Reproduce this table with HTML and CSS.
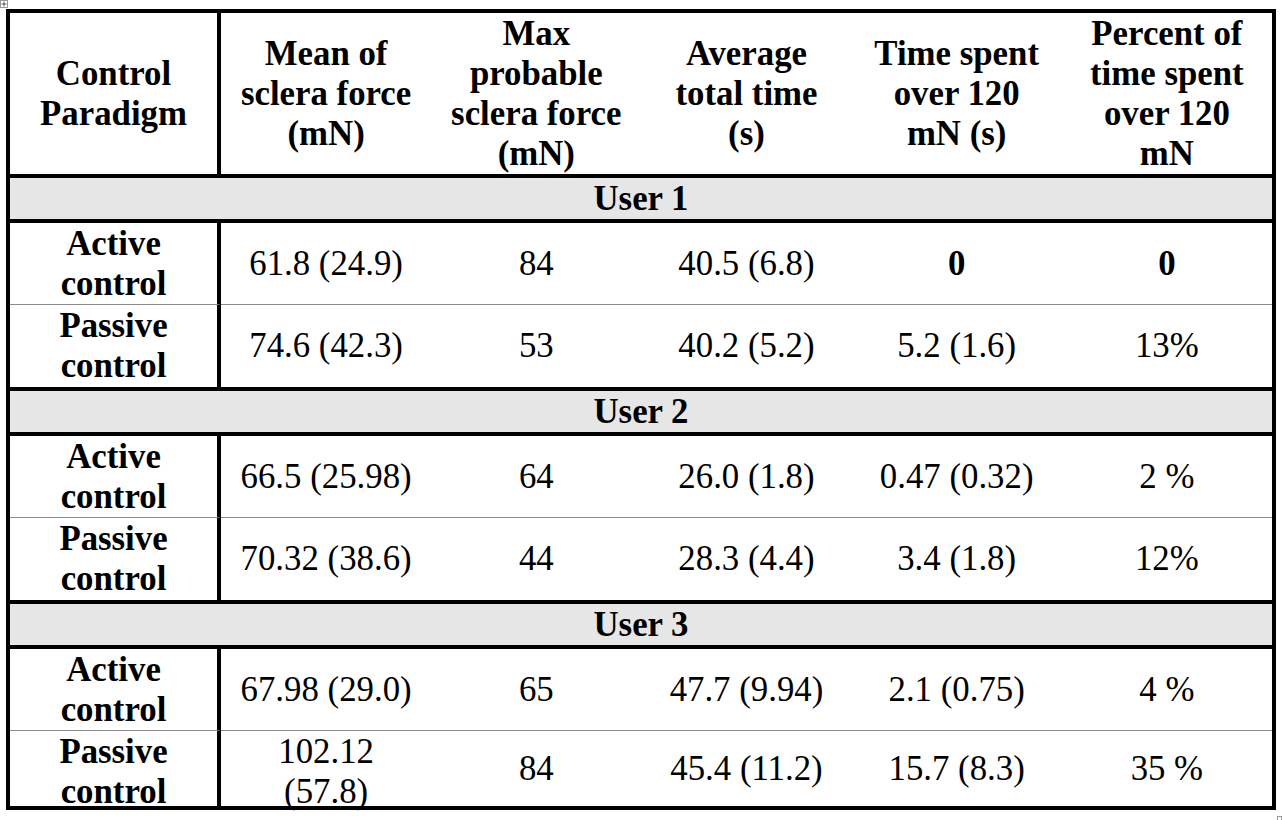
FILE: index.html
```html
<!DOCTYPE html>
<html>
<head>
<meta charset="utf-8">
<link rel="stylesheet" href="styles.css">
</head>
<body>
<div class="move-handle">
  <svg width="8" height="8" viewBox="0 0 8 8"><rect x="0.5" y="0.5" width="7" height="7" fill="#fff" stroke="#9a9a9a"/><path d="M4 1.5V6.5M1.5 4H6.5" stroke="#555" stroke-width="1"/></svg>
</div>
<table class="results">
  <colgroup>
    <col class="c-first">
    <col><col><col><col><col>
  </colgroup>
  <tr class="head">
    <td class="label">Control Paradigm</td>
    <td>Mean of sclera force (mN)</td>
    <td>Max probable sclera force (mN)</td>
    <td>Average total time (s)</td>
    <td>Time spent over 120 mN (s)</td>
    <td>Percent of time spent over 120 mN</td>
  </tr>
  <tr class="user"><td colspan="6">User 1</td></tr>
  <tr class="active">
    <td class="label">Active control</td>
    <td>61.8 (24.9)</td><td>84</td><td>40.5 (6.8)</td><td class="strong">0</td><td class="strong">0</td>
  </tr>
  <tr class="passive">
    <td class="label">Passive control</td>
    <td>74.6 (42.3)</td><td>53</td><td>40.2 (5.2)</td><td>5.2 (1.6)</td><td>13%</td>
  </tr>
  <tr class="user"><td colspan="6">User 2</td></tr>
  <tr class="active">
    <td class="label">Active control</td>
    <td>66.5 (25.98)</td><td>64</td><td>26.0 (1.8)</td><td>0.47 (0.32)</td><td>2 %</td>
  </tr>
  <tr class="passive">
    <td class="label">Passive control</td>
    <td>70.32 (38.6)</td><td>44</td><td>28.3 (4.4)</td><td>3.4 (1.8)</td><td>12%</td>
  </tr>
  <tr class="user"><td colspan="6">User 3</td></tr>
  <tr class="active">
    <td class="label">Active control</td>
    <td>67.98 (29.0)</td><td>65</td><td>47.7 (9.94)</td><td>2.1 (0.75)</td><td>4 %</td>
  </tr>
  <tr class="passive last">
    <td class="label"><div class="clip">Passive control</div></td>
    <td><div class="clip">102.12 (57.8)</div></td>
    <td><div class="clip mid">84</div></td>
    <td><div class="clip mid">45.4 (11.2)</div></td>
    <td><div class="clip mid">15.7 (8.3)</div></td>
    <td><div class="clip mid">35 %</div></td>
  </tr>
</table>
<div class="resize-handle"></div>
</body>
</html>
```

FILE: styles.css
```css
html, body {
  margin: 0;
  padding: 0;
  background: #ffffff;
}

body {
  position: relative;
  width: 1282px;
  height: 820px;
  overflow: hidden;
  font-family: "Liberation Serif", "Times New Roman", serif;
  color: #000;
}

.move-handle {
  position: absolute;
  left: 0;
  top: 0;
  width: 8px;
  height: 8px;
  line-height: 0;
}

.resize-handle {
  position: absolute;
  left: 1277px;
  top: 816px;
  width: 5px;
  height: 5px;
  border: 1px solid #9a9a9a;
  box-sizing: border-box;
  background: #fff;
}

.results {
  margin: 9px 0 0 6px;
  width: 1270px;
  table-layout: fixed;
  border-collapse: separate;
  border-spacing: 0;
  border: 4px solid #000;
  font-size: 34.8px;
  line-height: 40px;
}

.c-first {
  width: 211px;
}

.results td {
  padding: 0 14px;
  text-align: center;
  vertical-align: middle;
  box-sizing: border-box;
}

.results td.label {
  border-right: 4px solid #000;
  font-weight: bold;
}

.head td {
  font-weight: bold;
  height: 165px;
  border-bottom: 4px solid #000;
}

.user td {
  background: #e6e6e6;
  font-weight: bold;
  height: 45px;
  border-bottom: 4px solid #000;
}

.active td {
  height: 82px;
  border-bottom: 1px solid #8a8a8a;
}

.passive td {
  height: 86px;
  border-bottom: 4px solid #000;
}

.passive.last td {
  height: 75px;
  border-bottom: none;
  vertical-align: top;
}

.clip {
  height: 75px;
  padding-top: 1px;
  box-sizing: border-box;
  overflow: visible;
}

.clip.mid {
  display: flex;
  align-items: center;
  justify-content: center;
  padding-top: 0;
}

.strong {
  font-weight: bold;
}
```
